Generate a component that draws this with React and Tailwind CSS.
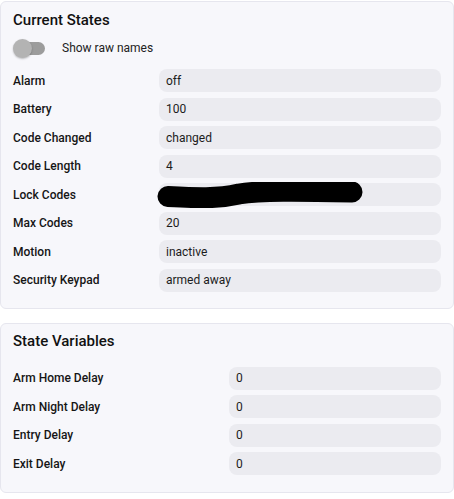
const currentStates = [
  { label: "Alarm", value: "off" },
  { label: "Battery", value: "100" },
  { label: "Code Changed", value: "changed" },
  { label: "Code Length", value: "4" },
  { label: "Lock Codes", value: "", redacted: true },
  { label: "Max Codes", value: "20" },
  { label: "Motion", value: "inactive" },
  { label: "Security Keypad", value: "armed away" },
];

const stateVariables = [
  { label: "Arm Home Delay", value: "0" },
  { label: "Arm Night Delay", value: "0" },
  { label: "Entry Delay", value: "0" },
  { label: "Exit Delay", value: "0" },
];

const Redacted = () => (
  <svg
    className="absolute left-[-2px] top-[-1px]"
    width="206"
    height="26"
    viewBox="0 0 206 26"
  >
    <path
      d="M11 14.5 C40 16 60 17 82 12 C104 8.5 140 9 195 10"
      stroke="#000"
      strokeWidth="21"
      strokeLinecap="round"
      fill="none"
    />
  </svg>
);

const Rows = ({ items, cols }) => (
  <div className={`grid ${cols} gap-y-[5.5px] items-center`}>
    {items.map((item) => (
      <div key={item.label} className="contents">
        <span className="text-[12px] font-medium text-[#151515]">{item.label}</span>
        <div className="relative h-[23px] rounded-lg bg-[#ebebf0] pl-[7px] flex items-center text-[12px] text-[#1c1c1c]">
          {item.value}
          {item.redacted && <Redacted />}
        </div>
      </div>
    ))}
  </div>
);

const App = () => {
  return (
    <div className="min-h-screen w-[454px] bg-white font-['Roboto',sans-serif]">
      {/* current states */}
      <section className="mt-px w-[454px] rounded-md border border-[#e6e6ee] bg-[#f7f7fb] px-3 pt-[6px] pb-[16px]">
        <h2 className="text-[15px] leading-6 font-medium text-[#111]">
          Current States
        </h2>
        <div className="mt-[6px] h-[20px] flex items-center">
          <div className="relative w-[33px] h-[20px] flex items-center">
            <div className="absolute left-[8px] w-[24px] h-[13px] rounded-full bg-[#9c9c9c]" />
            <div className="absolute left-0 w-[19px] h-[19px] rounded-full bg-[#b3b3b3] shadow-[0_1px_2px_rgba(0,0,0,0.25)]" />
          </div>
          <span className="ml-[16px] text-[12px] text-[#222]">Show raw names</span>
        </div>
        <div className="mt-[11px]">
          <Rows items={currentStates} cols="grid-cols-[146px_1fr]" />
        </div>
      </section>

      {/* state variables */}
      <section className="mt-[14px] w-[454px] rounded-md border border-[#e6e6ee] bg-[#f7f7fb] px-3 pt-[5px] pb-[17px]">
        <h2 className="text-[15px] leading-6 font-medium text-[#111]">
          State Variables
        </h2>
        <div className="mt-[14px]">
          <Rows items={stateVariables} cols="grid-cols-[216px_1fr]" />
        </div>
      </section>
    </div>
  );
};

export default App;
